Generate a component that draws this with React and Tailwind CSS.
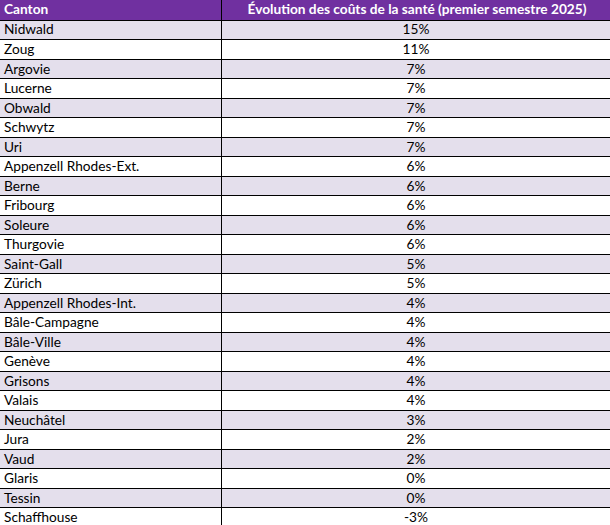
const rows = [
  ['Nidwald', '15%'],
  ['Zoug', '11%'],
  ['Argovie', '7%'],
  ['Lucerne', '7%'],
  ['Obwald', '7%'],
  ['Schwytz', '7%'],
  ['Uri', '7%'],
  ['Appenzell Rhodes-Ext.', '6%'],
  ['Berne', '6%'],
  ['Fribourg', '6%'],
  ['Soleure', '6%'],
  ['Thurgovie', '6%'],
  ['Saint-Gall', '5%'],
  ['Zürich', '5%'],
  ['Appenzell Rhodes-Int.', '4%'],
  ['Bâle-Campagne', '4%'],
  ['Bâle-Ville', '4%'],
  ['Genève', '4%'],
  ['Grisons', '4%'],
  ['Valais', '4%'],
  ['Neuchâtel', '3%'],
  ['Jura', '2%'],
  ['Vaud', '2%'],
  ['Glaris', '0%'],
  ['Tessin', '0%'],
  ['Schaffhouse', '-3%']
];

const App = () => {
  return (
    <div className="h-[525px] w-[610px] overflow-hidden bg-white font-['Lato',sans-serif] text-[13.7px] text-black">
      <div className="flex h-[20.5px] border-b border-black bg-[#7030a0] font-bold text-white">
        <div className="flex w-[222px] items-center border-r border-black pl-[4px]">Canton</div>
        <div className="flex flex-1 items-center justify-center pl-[2px]">
          Évolution des coûts de la santé (premier semestre 2025)
        </div>
      </div>
      {rows.map(([canton, value], index) => (
        <div
          key={canton}
          className={`flex h-[19.53px] border-b border-black ${index % 2 === 0 ? 'bg-[#e4dfec]' : 'bg-white'}`}
        >
          <div className="flex w-[222px] items-center border-r border-black pl-[4px]">{canton}</div>
          <div className="flex flex-1 items-center justify-center">{value}</div>
        </div>
      ))}
    </div>
  );
};

export default App;
